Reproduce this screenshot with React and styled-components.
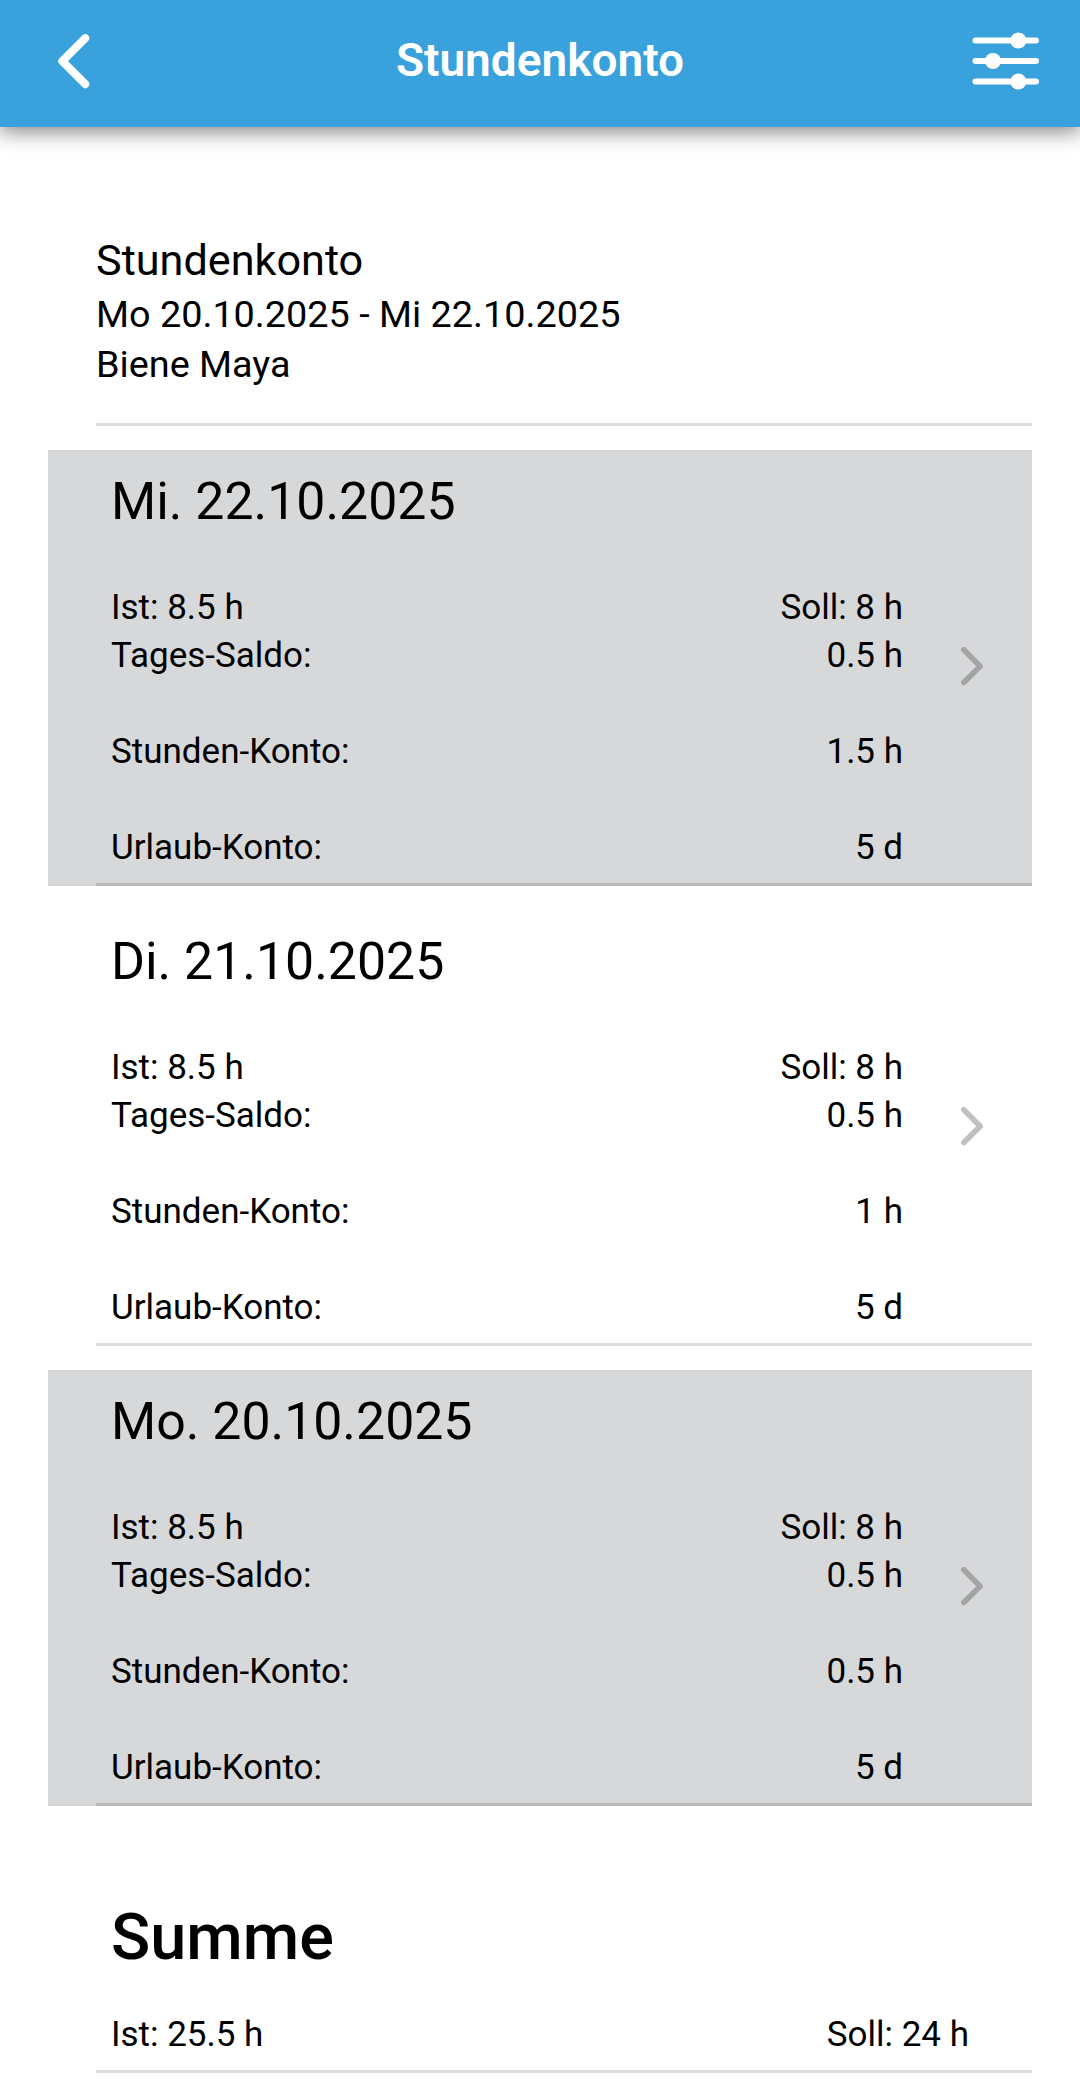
import styled, { createGlobalStyle } from "styled-components";

const days = [
  { date: "Mi. 22.10.2025", ist: "8.5 h", soll: "8 h", saldo: "0.5 h", konto: "1.5 h", urlaub: "5 d" },
  { date: "Di. 21.10.2025", ist: "8.5 h", soll: "8 h", saldo: "0.5 h", konto: "1 h", urlaub: "5 d" },
  { date: "Mo. 20.10.2025", ist: "8.5 h", soll: "8 h", saldo: "0.5 h", konto: "0.5 h", urlaub: "5 d" },
];

const BackIcon = () => (
  <svg width="36" height="60" viewBox="0 0 36 60" fill="none">
    <path
      d="M29.3 7.2 L6.3 30.2 L29.3 53.2"
      stroke="#fff"
      strokeWidth="8"
      strokeLinecap="round"
      strokeLinejoin="round"
    />
  </svg>
);

const FilterIcon = () => (
  <svg width="67" height="60" viewBox="0 0 67 60" fill="#fff">
    <path
      d="M3.5 9.5 H64 M3.5 30 H64 M3.5 50.5 H64"
      stroke="#fff"
      strokeWidth="6"
      strokeLinecap="round"
    />
    <circle cx="46.3" cy="9.5" r="8" />
    <circle cx="21" cy="30" r="8" />
    <circle cx="46.3" cy="50.5" r="8" />
  </svg>
);

const DetailIcon = () => (
  <svg width="24" height="40" viewBox="0 0 24 40" fill="none">
    <path
      d="M3.8 2.8 L20.2 19.2 L3.8 35.6"
      stroke="currentColor"
      strokeWidth="5.6"
      strokeLinecap="round"
      strokeLinejoin="round"
    />
  </svg>
);

export default function App() {
  return (
    <Page>
      <GlobalStyle />
      <Toolbar>
        <IconButton aria-label="Zurück">
          <BackIcon />
        </IconButton>
        <Title>Stundenkonto</Title>
        <IconButton aria-label="Filter" $end>
          <FilterIcon />
        </IconButton>
      </Toolbar>

      <Content>
        <Intro>
          <IntroTitle>Stundenkonto</IntroTitle>
          <IntroLine>Mo 20.10.2025 - Mi 22.10.2025</IntroLine>
          <IntroLine>Biene Maya</IntroLine>
        </Intro>

        <DayList>
          {days.map((day, i) => (
            <DayItem key={day.date} $shaded={i % 2 === 0}>
              <DayInner $shaded={i % 2 === 0}>
                <DayBody>
                  <DayTitle>{day.date}</DayTitle>
                  <Row>
                    <span>Ist: {day.ist}</span>
                    <span>Soll: {day.soll}</span>
                  </Row>
                  <Row $spaced>
                    <span>Tages-Saldo:</span>
                    <span>{day.saldo}</span>
                  </Row>
                  <Row $spaced>
                    <span>Stunden-Konto:</span>
                    <span>{day.konto}</span>
                  </Row>
                  <Row>
                    <span>Urlaub-Konto:</span>
                    <span>{day.urlaub}</span>
                  </Row>
                </DayBody>
                <Detail $shaded={i % 2 === 0}>
                  <DetailIcon />
                </Detail>
              </DayInner>
            </DayItem>
          ))}
        </DayList>

        <Sum>
          <SumTitle>Summe</SumTitle>
          <Row>
            <span>Ist: 25.5 h</span>
            <span>Soll: 24 h</span>
          </Row>
        </Sum>
      </Content>
    </Page>
  );
}

const GlobalStyle = createGlobalStyle`
  * {
    box-sizing: border-box;
  }

  body {
    margin: 0;
    background: #fff;
    color: #000;
    font-family: Roboto, sans-serif;
  }
`;

const Page = styled.div`
  width: 1080px;
  height: 2093px;
  overflow: hidden;
  background: #fff;
`;

const Toolbar = styled.header`
  display: flex;
  align-items: center;
  justify-content: space-between;
  height: 127px;
  padding: 0 41px 6px 56px;
  background: #39a1dc;
  box-shadow: 0 6px 18px 0 rgba(0, 0, 0, 0.44);
`;

const IconButton = styled.button`
  display: flex;
  justify-content: ${({ $end }) => ($end ? "flex-end" : "flex-start")};
  width: 100px;
  padding: 0;
  border: none;
  background: none;
  cursor: pointer;
`;

const Title = styled.h1`
  margin: 0 15px 2px 0;
  color: #fff;
  font-size: 46px;
  font-weight: 600;
  line-height: 60px;
`;

const Content = styled.main`
  padding: 106px 48px 0;
`;

const Intro = styled.section`
  height: 193px;
  margin-left: 48px;
  border-bottom: 3px solid #dcdddd;
`;

const IntroTitle = styled.h2`
  margin: 0 0 1px;
  font-size: 43.2px;
  font-weight: 400;
  line-height: 55px;
`;

const IntroLine = styled.p`
  margin: 0;
  font-size: 37.8px;
  line-height: 50px;
`;

const DayList = styled.div`
  display: flex;
  flex-direction: column;
  gap: 24px;
  padding-top: 24px;
`;

const DayItem = styled.article`
  height: 436px;
  padding-left: 48px;
  background: ${({ $shaded }) => ($shaded ? "#d7d8da" : "#fff")};
`;

const DayInner = styled.div`
  display: flex;
  align-items: center;
  height: 100%;
  padding: 0 48px 0 15px;
  border-bottom: 3px solid ${({ $shaded }) => ($shaded ? "#b7b8b9" : "#dcdddd")};
`;

const DayBody = styled.div`
  flex: 1;
  align-self: flex-start;
  padding-top: 21px;
`;

const DayTitle = styled.h3`
  margin: 0 0 51px;
  font-size: 51.8px;
  font-weight: 400;
  line-height: 62px;
`;

const Row = styled.div`
  display: flex;
  justify-content: space-between;
  margin-bottom: ${({ $spaced }) => ($spaced ? "48px" : "0")};
  font-size: 35px;
  line-height: 48px;
`;

const Detail = styled.div`
  display: flex;
  margin-left: 57px;
  color: ${({ $shaded }) => ($shaded ? "#a3a4a5" : "#c0c0c0")};
`;

const Sum = styled.section`
  height: 267px;
  margin-left: 48px;
  padding: 93px 63px 0 15px;
  border-bottom: 3px solid #dcdddd;
`;

const SumTitle = styled.h2`
  margin: 0 0 36px;
  font-size: 64.8px;
  font-weight: 500;
  line-height: 76px;
`;
